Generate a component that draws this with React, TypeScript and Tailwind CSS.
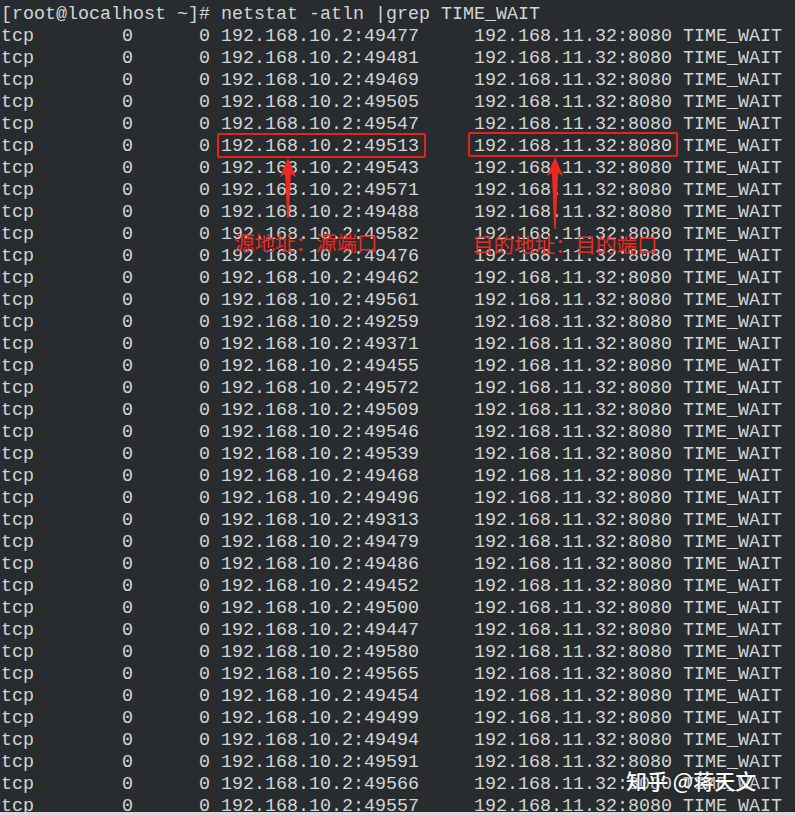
const ports = [
  "49477", "49481", "49469", "49505", "49547", "49513", "49543", "49571", "49488",
  "49582", "49476", "49462", "49561", "49259", "49371", "49455", "49572", "49509",
  "49546", "49539", "49468", "49496", "49313", "49479", "49486", "49452", "49500",
  "49447", "49580", "49565", "49454", "49499", "49494", "49591", "49566", "49557",
];

const header = "[root@localhost ~]# netstat -atln |grep TIME_WAIT";

function row(port: string) {
  return `tcp        0      0 192.168.10.2:${port}     192.168.11.32:8080 TIME_WAIT`;
}

function Arrow({ x, top, bottom }: { x: number; top: number; bottom: number }) {
  return (
    <polygon
      points={`${x},${top} ${x + 8},${top + 19} ${x + 3},${top + 16} ${x + 0.8},${bottom} ${x - 0.8},${bottom} ${x - 3},${top + 16} ${x - 8},${top + 19}`}
      fill="#ec2a22"
    />
  );
}

export default function App() {
  return (
    <div className="relative h-[815px] w-[795px] overflow-hidden bg-[#282c2f]">
      <pre
        className="whitespace-pre pl-px pt-[4px] text-[18.33px] leading-[22px] text-[#d3d5d5]"
        style={{ fontFamily: '"Liberation Mono", "Courier New", monospace' }}
      >
        {[header, ...ports.map(row)].join("\n")}
      </pre>

      {/* highlight boxes */}
      <div className="absolute left-[217px] top-[133px] h-[25px] w-[209px] rounded-[2px] border-[2.5px] border-[#e3241c]" />
      <div className="absolute left-[468px] top-[132px] h-[25px] w-[210px] rounded-[2px] border-[2.5px] border-[#e3241c]" />

      <svg className="absolute left-0 top-0" width="795" height="815">
        <Arrow x={288} top={158} bottom={218} />
        <Arrow x={555} top={157} bottom={229} />
      </svg>

      <div
        className="absolute left-[234px] top-[229px] text-[20.5px] leading-[26px] text-[#ec2a22]"
        style={{ fontFamily: '"Noto Sans CJK SC", sans-serif' }}
      >
        源地址：源端口
      </div>
      <div
        className="absolute left-[473px] top-[231px] text-[20.5px] leading-[26px] text-[#ec2a22]"
        style={{ fontFamily: '"Noto Sans CJK SC", sans-serif' }}
      >
        目的地址：目的端口
      </div>

      {/* watermark */}
      <div
        className="absolute left-[626px] top-[766px] text-[21px] font-medium leading-[28px] text-white [text-shadow:0_0_2px_rgba(0,0,0,0.6)]"
        style={{ fontFamily: '"Noto Sans CJK SC", sans-serif' }}
      >
        知乎 @蒋天文
      </div>

      <div className="absolute bottom-0 left-0 h-[3px] w-full bg-[#d9dadb]" />
    </div>
  );
}
